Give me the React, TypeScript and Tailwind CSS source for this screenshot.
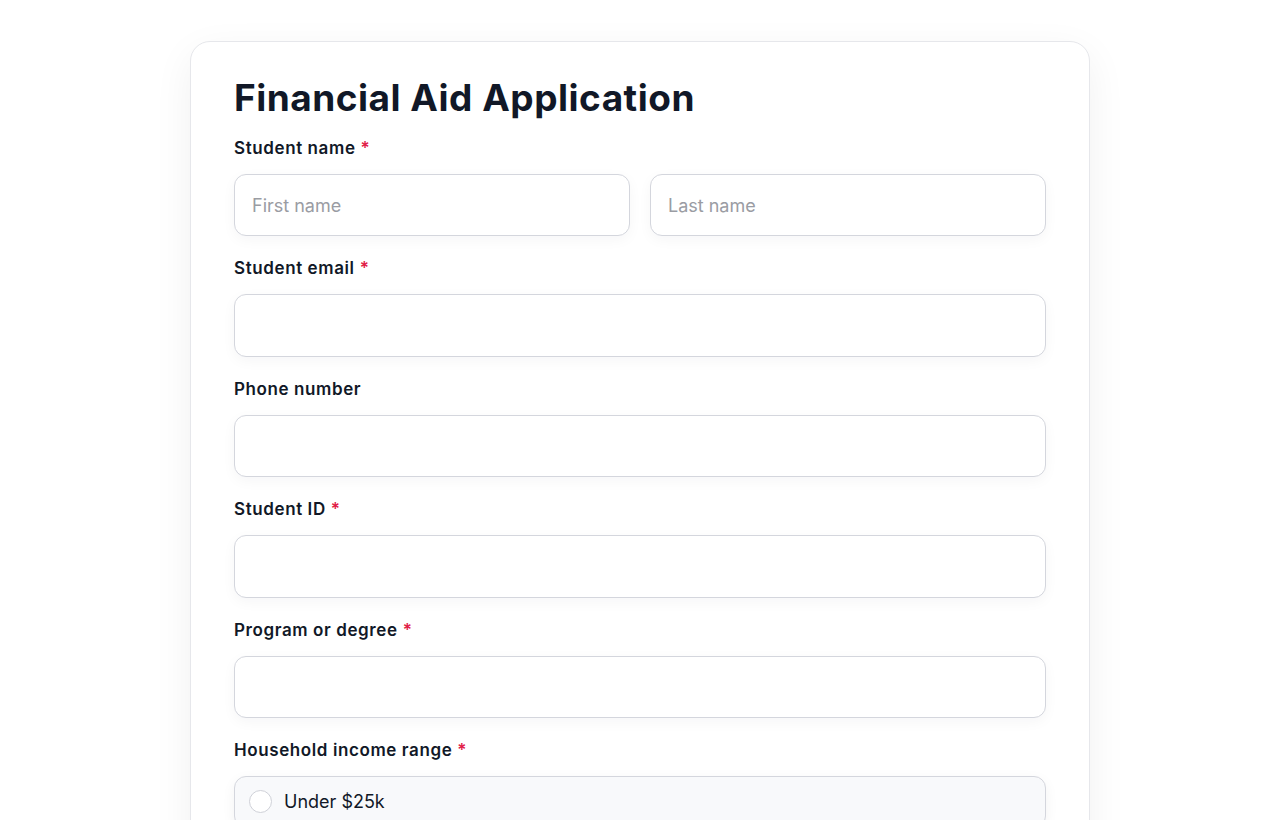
import React from "react";

const Req = () => <span className="text-[#e11d48] ml-[5px]">*</span>;

function Label({ children, required }: { children: React.ReactNode; required?: boolean }) {
  return (
    <div className="h-6 leading-6 text-[17px] font-semibold text-[#111827] tracking-[0.6px]">
      {children}
      {required && <Req />}
    </div>
  );
}

function Input({ placeholder }: { placeholder?: string }) {
  return (
    <input
      placeholder={placeholder}
      className="w-full h-[62.4px] rounded-xl border border-[#d4d6dd] bg-white px-[17px] text-[18px] text-[#111827] placeholder:text-[#9a9ca3] shadow-[0_4px_14px_rgba(17,24,39,0.04)] outline-none"
    />
  );
}

function Field({ label, required, placeholder }: { label: string; required?: boolean; placeholder?: string }) {
  return (
    <div className="flex flex-col gap-[14px]">
      <Label required={required}>{label}</Label>
      <Input placeholder={placeholder} />
    </div>
  );
}

export default function App() {
  return (
    <div className="min-h-screen bg-white" style={{ fontFamily: "Inter, 'Noto Sans', sans-serif" }}>
      <div className="pt-[41px] flex justify-center">
        <div className="w-[900px] rounded-[20px] border border-[#e6e7eb] bg-white px-[43px] pt-[32px] pb-10 shadow-[0_12px_40px_rgba(17,24,39,0.06)]">
          <h1 className="text-[37px] leading-[48px] font-bold text-[#111827] tracking-[0.5px]">Financial Aid Application</h1>
          <div className="mt-[14px] flex flex-col gap-5">
            <div className="flex flex-col gap-[14px]">
              <Label required>Student name</Label>
              <div className="grid grid-cols-2 gap-5">
                <Input placeholder="First name" />
                <Input placeholder="Last name" />
              </div>
            </div>
            <Field label="Student email" required />
            <Field label="Phone number" />
            <Field label="Student ID" required />
            <Field label="Program or degree" required />
            <div className="flex flex-col gap-[14px]">
              <Label required>Household income range</Label>
              <div className="flex flex-col gap-3">
                {["Under $25k", "$25k – $50k", "$50k – $75k", "$75k – $100k", "Over $100k"].map((o) => (
                  <label
                    key={o}
                    className="flex items-center gap-3 h-[52px] rounded-xl border border-[#d4d6dd] bg-[#f8f9fb] px-[14px] shadow-[0_4px_14px_rgba(17,24,39,0.05)]"
                  >
                    <span className="w-[23px] h-[23px] rounded-full border border-[#cfd1d8] bg-white" />
                    <span className="text-[18px] leading-6 text-[#111827]">{o}</span>
                  </label>
                ))}
              </div>
            </div>
          </div>
        </div>
      </div>
    </div>
  );
}
